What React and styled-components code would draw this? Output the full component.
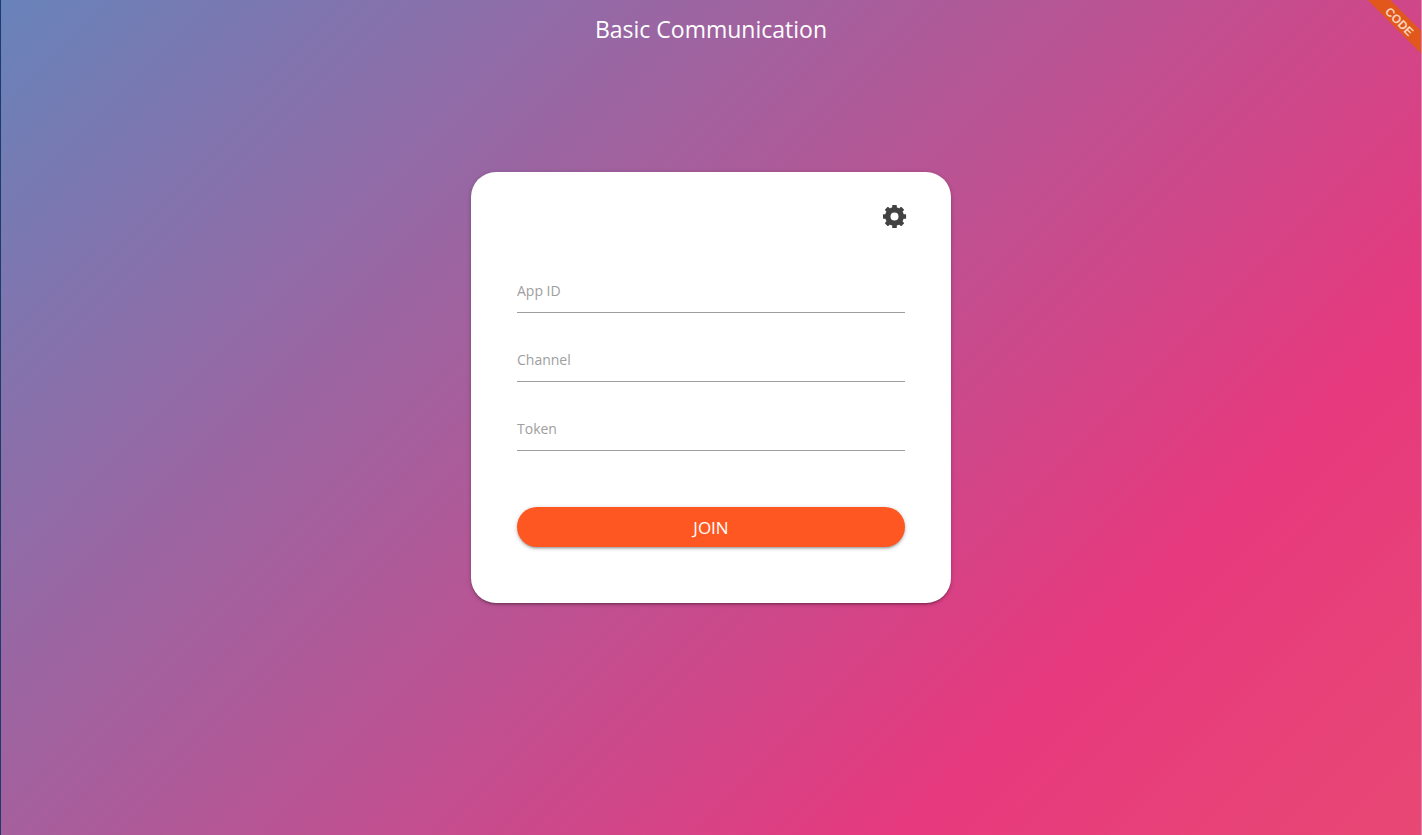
import React from "react";
import styled, { createGlobalStyle } from "styled-components";

const GlobalStyle = createGlobalStyle`
  *, *::before, *::after { box-sizing: border-box; }
  body {
    margin: 0;
    font-family: "Open Sans", "Noto Sans", sans-serif;
    font-size: 14px;
  }
`;

const Page = styled.div`
  position: relative;
  min-height: 100vh;
  display: flex;
  flex-direction: column;
  align-items: center;
  overflow: hidden;
  border-left: 1px solid #1b3c68;
  border-right: 1px solid #d98aae;
  background: linear-gradient(135deg, #6883ba 0%, #e7397e 77%, #e84874 100%);
`;

const Title = styled.h1`
  margin: 12px 0 0;
  font-size: 23px;
  line-height: 34px;
  font-weight: 400;
  color: #fff;
`;

const RibbonCorner = styled.div`
  position: absolute;
  top: 0;
  right: 0;
  width: 80px;
  height: 80px;
  overflow: hidden;
  pointer-events: none;
`;

const Ribbon = styled.a`
  position: absolute;
  top: 13px;
  right: -39px;
  width: 120px;
  height: 16px;
  transform: rotate(45deg);
  background: #e2571c;
  color: #f8d3bd;
  font-family: "Liberation Sans", sans-serif;
  font-size: 12px;
  line-height: 18px;
  font-weight: 700;
  text-align: center;
  text-decoration: none;
  pointer-events: auto;
`;

const Card = styled.form`
  width: 480px;
  max-width: 100%;
  margin-top: 126px;
  padding: 32px 46px 56px;
  display: flex;
  flex-direction: column;
  background: #fff;
  border-radius: 25px;
  box-shadow: 0 2px 2px rgba(0, 0, 0, 0.14), 0 3px 1px -2px rgba(0, 0, 0, 0.12),
    0 1px 5px rgba(0, 0, 0, 0.2);
`;

const SettingsButton = styled.button`
  align-self: flex-end;
  width: 24px;
  height: 24px;
  margin-right: -2px;
  padding: 0;
  border: 0;
  background: none;
  color: #424242;
  cursor: pointer;

  svg { display: block; }
`;

const Fields = styled.div`
  display: grid;
  gap: 23px;
  margin-top: 39px;
`;

const Input = styled.input`
  width: 100%;
  height: 46px;
  padding: 2px 0 0;
  border: 0;
  border-bottom: 1px solid #9e9e9e;
  border-radius: 0;
  outline: none;
  background: transparent;
  font: inherit;
  color: #333;

  &::placeholder { color: #9e9e9e; opacity: 1; }
  &:focus { border-bottom-color: #ff5722; }
`;

const JoinButton = styled.button`
  height: 40px;
  margin-top: 56px;
  border: 0;
  border-radius: 20px;
  background: #ff5722;
  color: #fff;
  font-family: inherit;
  font-size: 17px;
  line-height: 40px;
  cursor: pointer;
  box-shadow: 0 2px 2px rgba(0, 0, 0, 0.14), 0 3px 1px -2px rgba(0, 0, 0, 0.12),
    0 1px 5px rgba(0, 0, 0, 0.2);
`;

const FIELDS = [
  { name: "appid", label: "App ID" },
  { name: "channel", label: "Channel" },
  { name: "token", label: "Token" },
];

function GearIcon() {
  return (
    <svg width="24" height="24" viewBox="0 0 24 24" fill="currentColor" aria-hidden="true">
      <circle cx="11.5" cy="12.5" r="6.7" fill="none" stroke="currentColor" strokeWidth="5.4" />
      {[0, 45, 90, 135].map((angle) => (
        <g key={angle} transform={`rotate(${angle} 11.5 12.5)`}>
          <rect x="9.2" y="0.9" width="4.6" height="5" rx="0.6" />
          <rect x="9.2" y="19.1" width="4.6" height="5" rx="0.6" />
        </g>
      ))}
    </svg>
  );
}

export default function App() {
  return (
    <>
      <GlobalStyle />
      <Page>
        <Title>Basic Communication</Title>
        <Card onSubmit={(event) => event.preventDefault()}>
          <SettingsButton type="button" aria-label="Settings">
            <GearIcon />
          </SettingsButton>
          <Fields>
            {FIELDS.map(({ name, label }) => (
              <Input key={name} type="text" name={name} aria-label={label} placeholder={label} />
            ))}
          </Fields>
          <JoinButton type="submit">JOIN</JoinButton>
        </Card>
        <RibbonCorner>
          <Ribbon href="#code">CODE</Ribbon>
        </RibbonCorner>
      </Page>
    </>
  );
}
